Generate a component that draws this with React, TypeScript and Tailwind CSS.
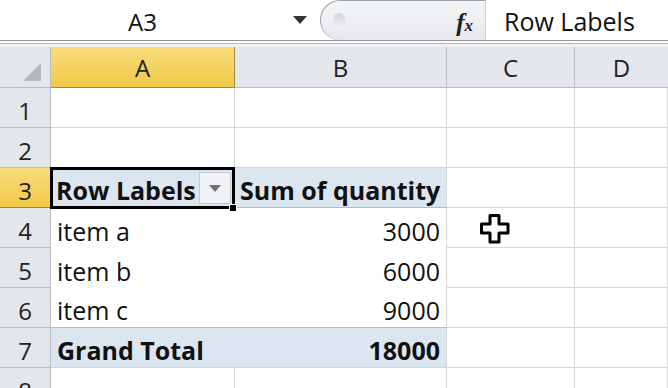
const font = "font-['Open_Sans','Liberation_Sans',sans-serif]"

const gridRow = 'grid grid-cols-[51px_184px_212px_128px_93px] grid-rows-[40px] h-[40px] leading-none'
const rowHead = 'flex items-center justify-center pt-[6px] border-r border-b border-[#b9bdc3] bg-[#e3e6ea] text-[24px] text-[#222]'
const cell = 'border-r border-b border-[#d6d6d6] bg-white'

const CursorPlus = () => (
  <svg width="32" height="32" viewBox="0 0 32 32" className="absolute left-[479px] top-[213px]">
    <path
      d="M11 2.5 H20 V11 H29 V20 H20 V29 H11 V20 H2.5 V11 H11 Z"
      fill="#fff"
      stroke="#000"
      strokeWidth="3"
      strokeLinejoin="round"
    />
  </svg>
)

const DataRow = ({ n, label, value, last }: { n: number; label: string; value: string; last?: boolean }) => (
  <div className={gridRow}>
    <div className={rowHead}>{n}</div>
    <div className={`flex items-center pt-[6px] pl-[6px] bg-white text-[25px] text-[#111] ${last ? 'border-b border-[#aebdd0]' : ''}`}>{label}</div>
    <div className={`flex items-center justify-end pt-[6px] pr-[6px] bg-white text-[25px] text-[#111] border-r border-[#d6d6d6] ${last ? 'border-b border-b-[#aebdd0]' : ''}`}>
      {value}
    </div>
    <div className={cell} />
    <div className={cell} />
  </div>
)

export default function App() {
  return (
    <div className={`relative w-[668px] h-[388px] overflow-hidden bg-white ${font}`}>
      {/* formula bar */}
      <div className="flex h-[40px] leading-none">
        <div className="flex items-center w-[322px] bg-white">
          <div className="w-[285px] pt-[3px] text-center text-[24px] text-[#111]">A3</div>
          <div className="ml-[8px] w-0 h-0 border-l-[7px] border-r-[7px] border-t-[8px] border-l-transparent border-r-transparent border-t-[#333]" />
        </div>
        <div className="flex items-center w-[166px] -ml-[2px] rounded-l-[26px] border-l border-t border-[#9ca1a8] bg-gradient-to-b from-[#f4f5f7] to-[#e6e8eb] border-r border-r-[#c9ccd0]">
          <div className="ml-[12px] w-[12px] h-[16px] rounded-full bg-gradient-to-b from-[#d0d3d8] to-[#f2f3f5]" />
          <div className="ml-auto mr-[12px] pt-[4px] text-[25px] italic font-bold text-[#222] font-['Liberation_Serif',serif]">
            f<span className="text-[17px]">x</span>
          </div>
        </div>
        <div className="flex items-center flex-1 bg-white pl-[18px] pt-[2px] text-[25px] text-[#111]">Row Labels</div>
      </div>
      <div className="h-[1px] bg-[#8f949a]" />
      <div className="h-[2px] bg-white" />
      <div className="h-[1px] bg-[#b5b9be]" />
      <div className="h-[3px] bg-[#f0f1f3]" />

      {/* column headers */}
      <div className="grid grid-cols-[51px_184px_212px_128px_93px] grid-rows-[41px] h-[41px] leading-none text-[24px] text-[#222]">
        <div className="flex items-end justify-end pr-[9px] pb-[6px] bg-[#e3e6ea] border-r border-b border-[#b9bdc3]">
          <svg width="18" height="18" viewBox="0 0 18 18">
            <path d="M18 0 V18 H0 Z" fill="#b3b8bf" />
          </svg>
        </div>
        <div className="flex items-center justify-center pt-[2px] bg-gradient-to-b from-[#f8dc78] to-[#f1c947] border-r border-b border-[#a08a48]">A</div>
        <div className="flex items-center justify-center pt-[2px] bg-[#e3e6ea] border-r border-b border-[#b9bdc3]">B</div>
        <div className="flex items-center justify-center pt-[2px] bg-[#e3e6ea] border-r border-b border-[#b9bdc3]">C</div>
        <div className="flex items-center justify-center pt-[2px] bg-[#e3e6ea] border-b border-[#b9bdc3]">D</div>
      </div>

      {/* rows 1-2 */}
      {[1, 2].map((n) => (
        <div key={n} className={gridRow}>
          <div className={rowHead}>{n}</div>
          <div className={cell} />
          <div className={cell} />
          <div className={cell} />
          <div className={cell} />
        </div>
      ))}

      {/* row 3 pivot header */}
      <div className={gridRow}>
        <div className="flex items-center justify-center pt-[6px] border-r border-b border-[#a08a48] bg-gradient-to-b from-[#f8dc78] to-[#f1c947] text-[24px] text-[#222]">3</div>
        <div className="relative flex items-center pt-[6px] pl-[5px] bg-[#dce6f1] border-b border-[#aebdd0] text-[25px] font-bold text-[#111]">
          Row Labels
          <div className="absolute left-[148px] top-[4px] flex items-center justify-center w-[32px] h-[32px] bg-[#f1f2f4] border border-[#c6c9cd]">
            <div className="w-0 h-0 border-l-[6px] border-r-[6px] border-t-[7px] border-l-transparent border-r-transparent border-t-[#6e7277]" />
          </div>
          <div className="absolute -left-[1px] -top-[1px] w-[185px] h-[42px] border-[3px] border-black" />
          <div className="absolute left-[178px] top-[36px] w-[8px] h-[8px] bg-black border border-white" />
        </div>
        <div className="flex items-center pt-[6px] pl-[5px] bg-[#dce6f1] border-r border-b border-r-[#d6d6d6] border-b-[#aebdd0] text-[25px] font-bold text-[#111]">
          Sum of quantity
        </div>
        <div className={cell} />
        <div className={cell} />
      </div>

      <DataRow n={4} label="item a" value="3000" />
      <DataRow n={5} label="item b" value="6000" />
      <DataRow n={6} label="item c" value="9000" last />

      {/* row 7 grand total */}
      <div className={gridRow}>
        <div className={rowHead}>7</div>
        <div className="flex items-center pt-[6px] pl-[6px] bg-[#dce6f1] border-b border-[#d6d6d6] text-[25px] font-bold text-[#111]">Grand Total</div>
        <div className="flex items-center justify-end pt-[6px] pr-[6px] bg-[#dce6f1] border-r border-b border-[#d6d6d6] text-[25px] font-bold text-[#111]">18000</div>
        <div className={cell} />
        <div className={cell} />
      </div>

      {/* row 8 */}
      <div className={gridRow}>
        <div className={rowHead}>8</div>
        <div className={cell} />
        <div className={cell} />
        <div className={cell} />
        <div className={cell} />
      </div>

      <CursorPlus />
    </div>
  )
}
